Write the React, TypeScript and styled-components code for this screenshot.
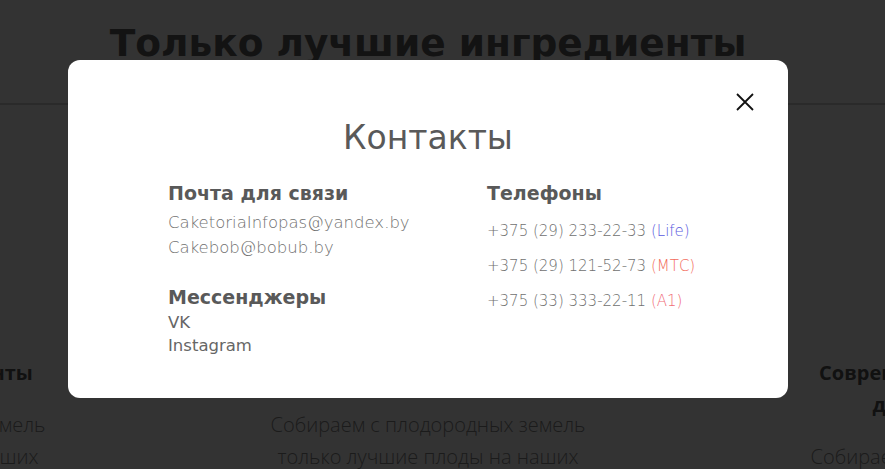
import styled, { createGlobalStyle } from "styled-components";

const Global = createGlobalStyle`
  html, body {
    margin: 0;
    padding: 0;
    background: #ffffff;
    overflow: hidden;
  }
  #root {
    width: 885px;
    height: 469px;
  }
`;

const Page = styled.div`
  width: 885px;
  height: 469px;
  overflow: hidden;
  font-family: "DejaVu Sans", sans-serif;
`;

const Hero = styled.section`
  height: 105px;
  border-bottom: 2px solid #d0d0d0;
  display: flex;
  justify-content: center;
  padding: 21px 29px 0 0;
  box-sizing: border-box;
`;

const HeroTitle = styled.h1`
  margin: 0;
  font-size: 37.5px;
  font-weight: 700;
  color: #626262;
`;

const Features = styled.div`
  display: flex;
  justify-content: center;
  align-items: flex-start;
  padding-right: 29px;
  margin-top: 252px;
`;

const Feature = styled.div`
  flex: 0 0 540px;
  text-align: center;
  font-family: "Open Sans", sans-serif;
`;

const FeatureTitle = styled.h3`
  margin: 0 0 20px;
  font-size: 20px;
  font-weight: 700;
  line-height: 32px;
  color: #555555;
`;

const FeatureText = styled.p`
  margin: 0;
  font-size: 20px;
  font-weight: 300;
  line-height: 32px;
  color: #888888;
`;

const Overlay = styled.div`
  position: fixed;
  inset: 0;
  background: rgba(0, 0, 0, 0.8);
  display: flex;
  justify-content: center;
  align-items: flex-start;
  padding: 60px 29px 0 0;
`;

const Modal = styled.div`
  position: relative;
  width: 720px;
  height: 338px;
  box-sizing: border-box;
  background: #ffffff;
  border-radius: 12px;
  padding: 58px 0 0 100px;
  font-family: "DejaVu Sans", sans-serif;
`;

const Close = styled.button`
  position: absolute;
  top: 33px;
  right: 34px;
  width: 18px;
  height: 18px;
  padding: 0;
  border: none;
  background: none;
  cursor: pointer;
`;

const ModalTitle = styled.h2`
  margin: 0 0 23px -100px;
  text-align: center;
  font-size: 33px;
  font-weight: 400;
  color: #595959;
`;

const Columns = styled.div`
  display: grid;
  grid-template-columns: 319px 1fr;
`;

const Group = styled.div<{ $gap?: number }>`
  margin-bottom: ${(p) => p.$gap ?? 0}px;
`;

const Heading = styled.h4<{ $after?: number }>`
  margin: 0 0 ${(p) => p.$after ?? 4}px;
  font-size: 19px;
  font-weight: 700;
  color: #595959;
  line-height: 26px;
`;

const Mail = styled.div`
  font-size: 16.5px;
  font-weight: 300;
  color: #707070;
  line-height: 25px;
`;

const Messenger = styled.div`
  font-size: 16.5px;
  font-weight: 400;
  color: #666666;
  line-height: 23px;
`;

const Phone = styled.div`
  font-size: 15px;
  font-weight: 300;
  color: #707070;
  line-height: 35px;
`;

const Operator = styled.span<{ $color: string }>`
  color: ${(p) => p.$color};
`;

export default function App() {
  return (
    <>
      <Global />
      <Page>
        <Hero>
          <HeroTitle>Только лучшие ингредиенты</HeroTitle>
        </Hero>
        <Features>
          <Feature>
            <FeatureTitle>Натуральные ингредиенты</FeatureTitle>
            <FeatureText>
              Собираем с плодородных земель
              <br />
              только лучшие плоды на наших
            </FeatureText>
          </Feature>
          <Feature>
            <FeatureTitle>Экологичность</FeatureTitle>
            <FeatureText>
              Собираем с плодородных земель
              <br />
              только лучшие плоды на наших
            </FeatureText>
          </Feature>
          <Feature>
            <FeatureTitle>
              Современное оборудование
              <br />
              для производства
            </FeatureTitle>
            <FeatureText>
              Собираем с плодородных земель
              <br />
              только лучшие плоды на наших
            </FeatureText>
          </Feature>
        </Features>
      </Page>
      <Overlay>
        <Modal>
          <Close aria-label="Закрыть">
            <svg width="18" height="18" viewBox="0 0 18 18">
              <path d="M1 1 L17 17 M17 1 L1 17" stroke="#111" strokeWidth="1.8" />
            </svg>
          </Close>
          <ModalTitle>Контакты</ModalTitle>
          <Columns>
            <div>
              <Group $gap={24}>
                <Heading>Почта для связи</Heading>
                <Mail>CaketoriaInfopas@yandex.by</Mail>
                <Mail>Cakebob@bobub.by</Mail>
              </Group>
              <Group>
                <Heading $after={1}>Мессенджеры</Heading>
                <Messenger>VK</Messenger>
                <Messenger>Instagram</Messenger>
              </Group>
            </div>
            <div>
              <Heading $after={8}>Телефоны</Heading>
              <Phone>
                +375 (29) 233-22-33 <Operator $color="#5a5ae0">(Life)</Operator>
              </Phone>
              <Phone>
                +375 (29) 121-52-73 <Operator $color="#f26b5b">(МТС)</Operator>
              </Phone>
              <Phone>
                +375 (33) 333-22-11 <Operator $color="#f06c78">(A1)</Operator>
              </Phone>
            </div>
          </Columns>
        </Modal>
      </Overlay>
    </>
  );
}
